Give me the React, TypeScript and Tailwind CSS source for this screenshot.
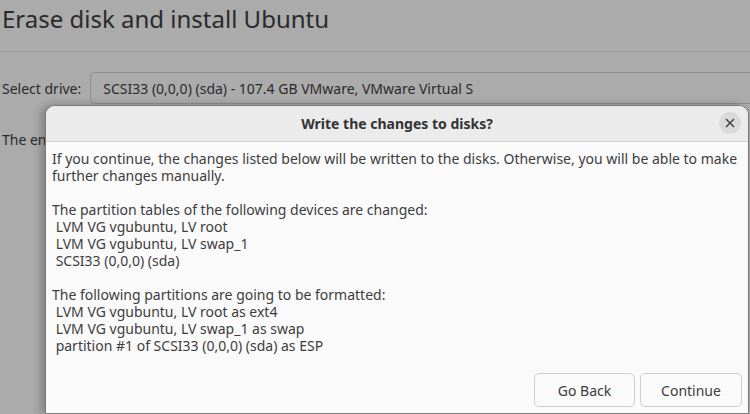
import React from 'react';

const font = { fontFamily: '"Noto Sans", "Open Sans", sans-serif' };

const Dialog = () => {
  return (
    <div className="absolute left-[45px] top-[105px] flex h-[309px] w-[704px] flex-col overflow-hidden rounded-t-[10px] border border-[#7a7a7a] bg-[#fafafa] shadow-[-4px_0_8px_rgba(0,0,0,0.25)]">
      <div className="relative flex h-[36px] shrink-0 items-center justify-center border-b border-[#d4d4d4] bg-[#ebebeb]">
        <span className="text-[14px] font-bold text-[#333]">Write the changes to disks?</span>
        <button className="absolute right-[7px] top-[6px] flex h-[22px] w-[22px] items-center justify-center rounded-full bg-[#dadada]">
          <svg width="10" height="10" viewBox="0 0 10 10">
            <path d="M1 1 L9 9 M9 1 L1 9" stroke="#3d3d3d" strokeWidth="1.4" />
          </svg>
        </button>
      </div>
      <div className="flex flex-1 flex-col px-[6px] pt-[8px] pb-[6px]">
        <div className="text-[14px] leading-[17px] text-[#3d3d3d]">
          <p>If you continue, the changes listed below will be written to the disks. Otherwise, you will be able to make further changes manually.</p>
          <p className="pt-[17px]">The partition tables of the following devices are changed:</p>
          <p>&nbsp;LVM VG vgubuntu, LV root</p>
          <p>&nbsp;LVM VG vgubuntu, LV swap_1</p>
          <p>&nbsp;SCSI33 (0,0,0) (sda)</p>
          <p className="pt-[17px]">The following partitions are going to be formatted:</p>
          <p>&nbsp;LVM VG vgubuntu, LV root as ext4</p>
          <p>&nbsp;LVM VG vgubuntu, LV swap_1 as swap</p>
          <p>&nbsp;partition #1 of SCSI33 (0,0,0) (sda) as ESP</p>
        </div>
        <div className="mt-auto flex justify-end gap-[5px]">
          <button className="h-[34px] w-[101px] rounded-[5px] border border-[#cfcfcf] bg-[#fafafa] text-[14px] text-[#3d3d3d]">Go Back</button>
          <button className="h-[34px] w-[102px] rounded-[5px] border border-[#cfcfcf] bg-[#fafafa] text-[14px] text-[#3d3d3d]">Continue</button>
        </div>
      </div>
    </div>
  );
};

const App = () => {
  return (
    <div className="relative h-[414px] w-[750px] overflow-hidden bg-[#ababab]" style={font}>
      <div className="flex flex-col">
        <h1 className="px-[2px] pt-[2px] text-[24px] leading-[34px] text-[#2a2a2a]">Erase disk and install Ubuntu</h1>
        <div className="mt-[15px] h-px bg-[#999]" />
        <div className="mt-[20px] flex items-center gap-[9px] pl-[2px]">
          <span className="text-[14px] text-[#2a2a2a]">Select drive:</span>
          <div className="flex h-[32px] flex-1 items-center rounded-l-[5px] border border-r-0 border-[#8e8e8e] pl-[12px] text-[14px] text-[#2a2a2a]">
            SCSI33 (0,0,0) (sda) - 107.4 GB VMware, VMware Virtual S
          </div>
        </div>
        <p className="mt-[25px] pl-[2px] text-[14px] text-[#2a2a2a]">The entire disk will be erased.</p>
      </div>
      <Dialog />
    </div>
  );
};

export default App;
